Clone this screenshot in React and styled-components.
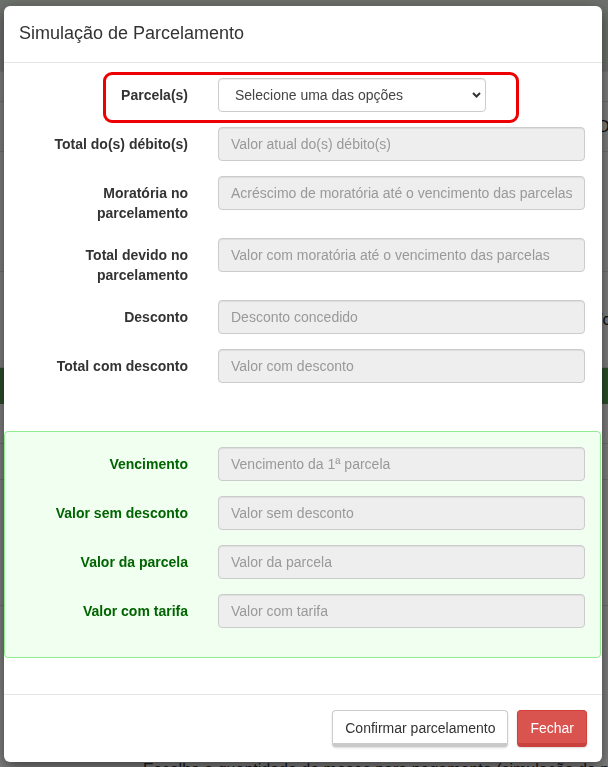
import React from 'react';
import styled, { createGlobalStyle } from 'styled-components';

const GlobalStyle = createGlobalStyle`
    html, body {
        margin: 0;
        padding: 0;
        font-family: "Liberation Sans", Arial, Helvetica, sans-serif;
        font-size: 14px;
        color: #333;
        background: #fff;
    }
    * { box-sizing: border-box; }
`

// page under the backdrop, only a strip of it shows
const Page = styled.div`
    min-height: 100vh;
    display: flex;
    flex-direction: column;
    background: #fff;
`
const PageTop = styled.div`
    height: 72px;
    background: #dbe2d8;
    border-bottom: 1px solid #eaeaea;
`
const PageLine = styled.div`
    height: ${props => props.h || '28px'};
    border-bottom: 1px solid #e0e0e0;
    padding-left: 598px;
    font-size: 16px;
    line-height: ${props => props.h || '28px'};
    color: #222;
    white-space: nowrap;
    overflow: hidden;
`
const PageBar = styled.div`
    height: 36px;
    background: #5a9f57;
`
const PageText = styled.p`
    margin: auto 0 0 0;
    padding: 0 0 0 143px;
    height: 10px;
    font-size: 16px;
    line-height: 26px;
    color: #333;
    white-space: nowrap;
    overflow: hidden;
`

const Backdrop = styled.div`
    position: fixed;
    inset: 0;
    background: rgba(0, 0, 0, 0.5);
`

const Modal = styled.div`
    position: fixed;
    top: 6px;
    left: 4px;
    width: 598px;
    background: #fff;
    border-radius: 6px;
    box-shadow: 0 5px 15px rgba(0, 0, 0, 0.5);
`
const Header = styled.div`
    padding: 15px;
    border-bottom: 1px solid #e5e5e5;
`
const Title = styled.h4`
    margin: 0;
    font-size: 18px;
    font-weight: 400;
    line-height: 1.42857;
    color: #333;
`
const Body = styled.div`
    padding: 15px 17px 15px 15px;
    display: flex;
    flex-direction: column;
    gap: 15px;
`
const Row = styled.div`
    position: relative;
    display: grid;
    grid-template-columns: 169px 1fr;
    column-gap: 30px;
    align-items: start;
    ${props => props.highlight && `
        &::after {
            content: '';
            position: absolute;
            top: -6px;
            left: 84px;
            width: 410px;
            height: 45px;
            border: 3px solid #ee0000;
            border-radius: 9px;
            pointer-events: none;
        }
    `}
`
const Label = styled.label`
    padding-top: 7px;
    text-align: right;
    font-weight: 700;
    font-size: 14px;
    line-height: 20px;
    color: ${props => props.green ? '#006400' : '#333'};
`
const Input = styled.input`
    width: 100%;
    height: 34px;
    padding: 6px 12px;
    font-family: inherit;
    font-size: 14px;
    line-height: 20px;
    color: #555;
    background: #eee;
    border: 1px solid #ccc;
    border-radius: 4px;
    box-shadow: inset 0 1px 1px rgba(0, 0, 0, 0.075);
    &::placeholder { color: #999; }
`
const SelectWrap = styled.div`
    position: relative;
    width: 268px;
`
const Select = styled.select`
    appearance: none;
    width: 100%;
    height: 34px;
    padding: 6px 24px 6px 16px;
    font-family: inherit;
    font-size: 14px;
    color: #444;
    background: #fff;
    border: 1px solid #ccc;
    border-radius: 4px;
    box-shadow: inset 0 1px 1px rgba(0, 0, 0, 0.075);
`
const Chevron = styled.svg`
    position: absolute;
    right: 5px;
    top: 14px;
    pointer-events: none;
`
const GreenBox = styled.div`
    margin: 33px -16px 21px -15px;
    padding: 15px 15px 29px 14px;
    background: #f0fff0;
    border: 1px solid #90ee90;
    border-radius: 4px;
    display: flex;
    flex-direction: column;
    gap: 15px;
`
const Footer = styled.div`
    padding: 15px;
    border-top: 1px solid #e5e5e5;
    display: flex;
    justify-content: flex-end;
    gap: 9px;
`
const Button = styled.button`
    height: 37px;
    padding: 6px 12px 4px;
    font-family: inherit;
    font-size: 14px;
    line-height: 20px;
    border-radius: 4px;
    cursor: pointer;
    color: ${props => props.danger ? '#fff' : '#333'};
    background: ${props => props.danger ? '#d9534f' : '#fff'};
    border: 1px solid ${props => props.danger ? '#d43f3a' : '#ccc'};
    border-bottom: 4px solid ${props => props.danger ? '#c9403c' : '#cacaca'};
    box-shadow: 0 1px 2px rgba(0, 0, 0, 0.15);
`

const fields = [
    { label: 'Total do(s) débito(s)', ph: 'Valor atual do(s) débito(s)' },
    { label: 'Moratória no parcelamento', ph: 'Acréscimo de moratória até o vencimento das parcelas' },
    { label: 'Total devido no parcelamento', ph: 'Valor com moratória até o vencimento das parcelas' },
    { label: 'Desconto', ph: 'Desconto concedido' },
    { label: 'Total com desconto', ph: 'Valor com desconto' },
]

const greenFields = [
    { label: 'Vencimento', ph: 'Vencimento da 1ª parcela' },
    { label: 'Valor sem desconto', ph: 'Valor sem desconto' },
    { label: 'Valor da parcela', ph: 'Valor da parcela' },
    { label: 'Valor com tarifa', ph: 'Valor com tarifa' },
]

export default function App() {
    return (
        <>
            <GlobalStyle />
            <Page>
                <PageTop />
                <PageLine h="30px" />
                <PageLine h="50px">Dados</PageLine>
                <PageLine h="120px" />
                <PageLine h="96px">/c</PageLine>
                <PageBar />
                <PageLine h="40px" />
                <PageLine h="36px" />
                <PageLine h="126px" />
                <PageText>Escolha a quantidade de meses para pagamento (simulação de parcelamento)</PageText>
            </Page>
            <Backdrop />
            <Modal>
                <Header>
                    <Title>Simulação de Parcelamento</Title>
                </Header>
                <Body>
                    <Row highlight>
                        <Label>Parcela(s)</Label>
                        <SelectWrap>
                            <Select defaultValue="">
                                <option value="">Selecione uma das opções</option>
                            </Select>
                            <Chevron width="9" height="6" viewBox="0 0 9 6">
                                <path d="M1 1 L4.5 4.5 L8 1" fill="none" stroke="#333" strokeWidth="2" />
                            </Chevron>
                        </SelectWrap>
                    </Row>
                    {fields.map(f => (
                        <Row key={f.label}>
                            <Label>{f.label}</Label>
                            <Input disabled placeholder={f.ph} />
                        </Row>
                    ))}
                    <GreenBox>
                        {greenFields.map(f => (
                            <Row key={f.label}>
                                <Label green>{f.label}</Label>
                                <Input disabled placeholder={f.ph} />
                            </Row>
                        ))}
                    </GreenBox>
                </Body>
                <Footer>
                    <Button>Confirmar parcelamento</Button>
                    <Button danger>Fechar</Button>
                </Footer>
            </Modal>
        </>
    )
}
